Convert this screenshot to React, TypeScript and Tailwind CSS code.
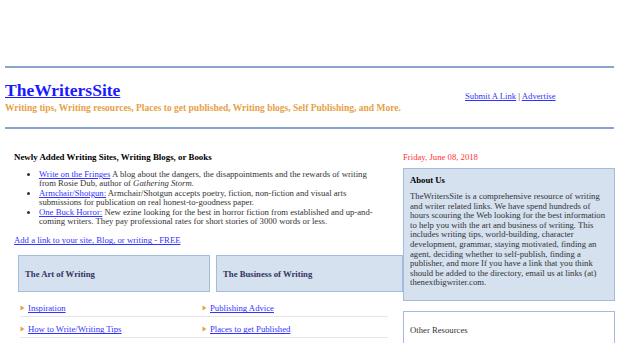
import React from "react";

const Arrow = () => (
  <svg width="5" height="6" viewBox="0 0 5 6" className="shrink-0">
    <polygon points="0.5,0.5 4.5,3 0.5,5.5" fill="#e8a040" />
  </svg>
);

const LinkRow = ({ text }: { text: string }) => (
  <div className="flex items-center gap-[3px] pt-[7px] pb-[3px] border-b border-[#e6e6e6] h-[21px]">
    <Arrow />
    <a className="text-[#3333ff] underline leading-[10px]">{text}</a>
  </div>
);

export default function App() {
  return (
    <div
      className="w-[620px] h-[343px] overflow-hidden bg-white text-[#333333]"
      style={{ fontFamily: '"Liberation Serif", "Times New Roman", serif' }}
    >
      <div className="h-[66px]" />
      <div className="mx-[5px] w-[609px] border-t-2 border-[#8aa4d0]" />
      <div className="flex px-[5px] pt-[12px]">
        <div className="w-[460px]">
          <a className="block text-[17.5px] leading-[20px] font-bold text-[#1a1aff] underline">
            TheWritersSite
          </a>
          <div className="mt-[3px] text-[9.5px] leading-[10px] font-bold text-[#e8a048] whitespace-nowrap">
            Writing tips, Writing resources, Places to get published, Writing blogs, Self Publishing, and More.
          </div>
        </div>
        <div className="pt-[11px] text-[8.7px] leading-[10px] whitespace-nowrap">
          <a className="text-[#3333ff] underline">Submit A Link</a>
          <span className="text-[#333]"> | </span>
          <a className="text-[#3333ff] underline">Advertise</a>
        </div>
      </div>
      <div className="mx-[5px] mt-[14px] w-[609px] border-t-2 border-[#8aa4d0]" />

      <div className="flex pt-[23px] text-[8.7px] leading-[10px]">
        <div className="w-[403px] pl-[14px]">
          <div className="font-bold text-black text-[8.9px]">
            Newly Added Writing Sites, Writing Blogs, or Books
          </div>
          <ul className="mt-[8px] list-disc pl-[25px] w-[365px] leading-[9.4px]">
            <li>
              <a className="text-[#3333ff] underline">Write on the Fringes</a> A blog about the
              dangers, the disappointments and the rewards of writing from Rosie Dub, author of{" "}
              <i>Gathering Storm.</i>
            </li>
            <li>
              <a className="text-[#3333ff] underline">Armchair/Shotgun:</a> Armchair/Shotgun accepts
              poetry, fiction, non-fiction and visual arts submissions for publication on real
              honest-to-goodness paper.
            </li>
            <li>
              <a className="text-[#3333ff] underline">One Buck Horror:</a> New ezine looking for the
              best in horror fiction from established and up-and-coming writers. They pay
              professional rates for short stories of 3000 words or less.
            </li>
          </ul>
          <a className="block mt-[9px] text-[#3333ff] underline">
            Add a link to your site, Blog, or writing - FREE
          </a>
          <div className="mt-[10px] ml-[4px] flex gap-[6px]">
            <div className="w-[192px] h-[37px] bg-[#d5e1ef] border border-[#a3bbdc] flex items-center pl-[6px] font-bold text-[#33335e]">
              The Art of Writing
            </div>
            <div className="w-[187px] h-[37px] bg-[#d5e1ef] border border-[#a3bbdc] flex items-center pl-[6px] font-bold text-[#33335e]">
              The Business of Writing
            </div>
          </div>
          <div className="mt-[4px] ml-[6px] grid grid-cols-[182px_186px]">
            <div>
              <LinkRow text="Inspiration" />
              <LinkRow text="How to Write/Writing Tips" />
            </div>
            <div>
              <LinkRow text="Publishing Advice" />
              <LinkRow text="Places to get Published" />
            </div>
          </div>
        </div>

        <div className="w-[212px]">
          <div className="text-[#ff3333]">Friday, June 08, 2018</div>
          <div className="mt-[6px] h-[133px] bg-[#d5e1ef] border border-[#a3bbdc] px-[6px] pt-[6px]">
            <div className="font-bold text-black">About Us</div>
            <div className="mt-[7px] leading-[9.6px]">
              TheWritersSite is a comprehensive resource of writing and writer related links. We have
              spend hundreds of hours scouring the Web looking for the best information to help you
              with the art and business of writing. This includes writing tips, world-building,
              character development, grammar, staying motivated, finding an agent, deciding whether
              to self-publish, finding a publisher, and more If you have a link that you think should
              be added to the directory, email us at links (at) thenextbigwriter.com.
            </div>
          </div>
          <div className="mt-[10px] h-[60px] bg-white border border-[#a3bbdc] px-[6px] pt-[13px]">
            Other Resources
          </div>
        </div>
      </div>
    </div>
  );
}
